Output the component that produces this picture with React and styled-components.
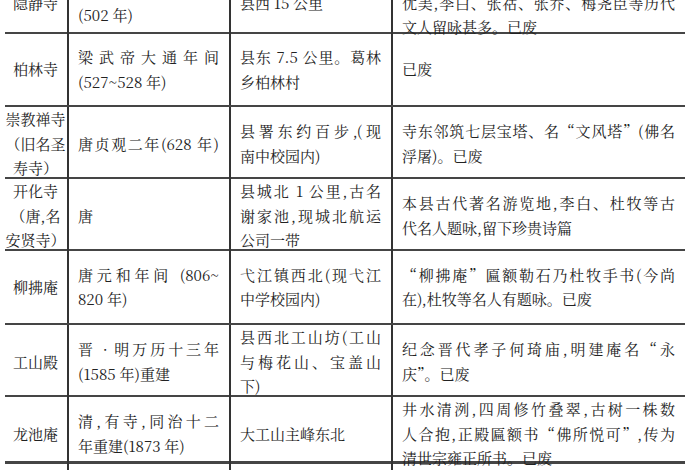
import React from "react";
import styled, { createGlobalStyle } from "styled-components";

const Global = createGlobalStyle`
  html, body { margin: 0; padding: 0; background: #fff; }
  body { overflow: hidden; }
  #root { width: 700px; height: 470px; overflow: hidden; }
`;

const Page = styled.div`
  width: 700px;
  height: 470px;
  overflow: hidden;
  background: #fff;
  font-family: "Noto Serif CJK SC", "Noto Sans CJK SC", "Liberation Serif", serif;
  color: #222;
  font-size: 15px;
`;

const Sheet = styled.div`
  margin-top: -34px;
  margin-left: 5px;
  width: 680px;
`;

const Row = styled.div`
  display: grid;
  grid-template-columns: 64px 162px 162px 292px;
  height: ${(p) => p.$h}px;
  border-bottom: ${(p) => p.$b ?? 2}px solid #454545;
  box-sizing: border-box;
`;

const Cell = styled.div`
  display: flex;
  flex-direction: column;
  justify-content: center;
  box-sizing: border-box;
  min-width: 0;
  padding: ${(p) => (p.$name ? "0 1px 0 0" : "0 10px 0 9px")};
  text-align: ${(p) => (p.$name ? "center" : "left")};
  border-right: ${(p) => (p.$last ? "none" : "2px solid #333")};
`;

const Line = styled.div`
  line-height: 24.5px;
  white-space: nowrap;
  text-align: ${(p) => (p.$j ? "justify" : "inherit")};
  text-align-last: ${(p) => (p.$j ? "justify" : "auto")};
`;

const J = (t) => ({ t, j: true });

const rows = [
  {
    h: 68,
    cells: [["隐静寺"], ["\u00a0", "(502 年)"], ["县西 15 公里"], ["\u00a0", J("优美,李白、张祜、张乔、梅尧臣等历代"), "文人留咏甚多。已废"]],
  },
  {
    h: 73,
    cells: [["柏林寺"], [J("梁武帝大通年间"), "(527~528 年)"], [J("县东 7.5 公里。葛林"), "乡柏林村"], ["已废"]],
  },
  {
    h: 72,
    cells: [
      ["崇教禅寺", "（旧名圣", "寿寺）"],
      [J("唐贞观二年(628 年)")],
      [J("县署东约百步,(现"), "南中校园内)"],
      [J("寺东邻筑七层宝塔、名“文风塔”(佛名"), "浮屠)。已废"],
    ],
  },
  {
    h: 72,
    cells: [
      ["开化寺", "（唐,名", "安贤寺）"],
      ["唐"],
      [J("县城北 1 公里,古名"), J("谢家池,现城北航运"), "公司一带"],
      [J("本县古代著名游览地,李白、杜牧等古"), "代名人题咏,留下珍贵诗篇"],
    ],
  },
  {
    h: 74,
    cells: [
      ["柳拂庵"],
      [J("唐元和年间 (806~"), "820 年)"],
      [J("弋江镇西北(现弋江"), "中学校园内)"],
      [J("“柳拂庵”匾额勒石乃杜牧手书(今尚"), "在),杜牧等名人有题咏。已废"],
    ],
  },
  {
    h: 72,
    cells: [
      ["工山殿"],
      [J("晋 · 明万历十三年"), "(1585 年)重建"],
      [J("县西北工山坊(工山"), J("与梅花山、宝盖山"), "下)"],
      [J("纪念晋代孝子何琦庙,明建庵名“永"), "庆”。已废"],
    ],
  },
  {
    h: 67,
    b: 3,
    cells: [
      ["龙池庵"],
      [J("清,有寺,同治十二"), "年重建(1873 年)"],
      ["大工山主峰东北"],
      [
        J("井水清洌,四周修竹叠翠,古树一株数"),
        J("人合抱,正殿匾额书“佛所悦可”,传为"),
        "清世宗雍正所书。已废",
      ],
    ],
  },
  { h: 40, b: 0, cells: [[], [], [], []] },
];

export default function App() {
  return (
    <Page>
      <Global />
      <Sheet>
        {rows.map((r, ri) => (
          <Row key={ri} $h={r.h} $b={r.b}>
            {r.cells.map((lines, ci) => (
              <Cell key={ci} $name={ci === 0} $last={ci === 3}>
                {lines.map((ln, li) =>
                  typeof ln === "string" ? (
                    <Line key={li}>{ln}</Line>
                  ) : (
                    <Line key={li} $j>
                      {ln.t}
                    </Line>
                  )
                )}
              </Cell>
            ))}
          </Row>
        ))}
      </Sheet>
    </Page>
  );
}
